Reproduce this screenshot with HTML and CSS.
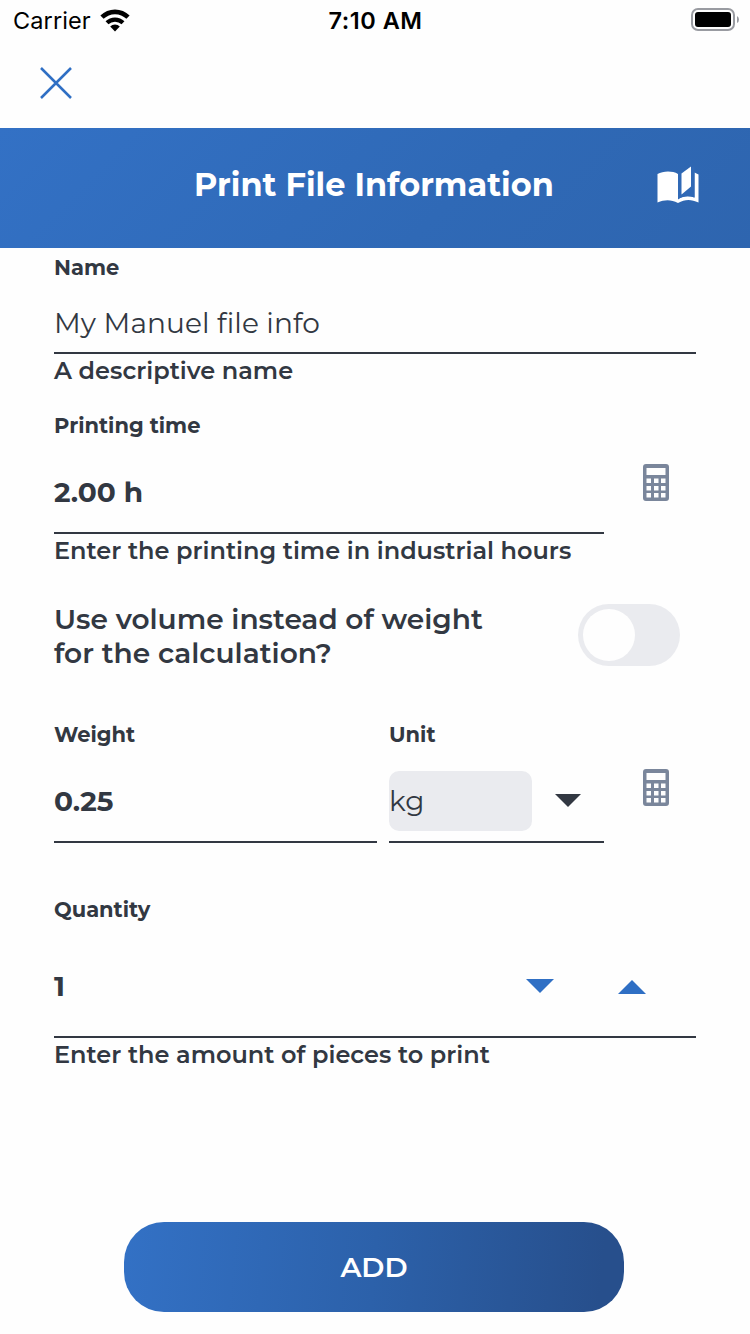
FILE: index.html
```html
<!DOCTYPE html>
<html lang="en">

<head>
  <meta charset="UTF-8">
  <title>Print File Information</title>
  <link rel="stylesheet" href="styles.css">
</head>

<body>
  <div class="app">
    <div class="status">
      <div class="status-left">
        <span class="carrier">Carrier</span>
        <svg class="wifi" width="30" height="23" viewBox="0 0 30 23">
          <path d="M2 8.2A18.5 18.5 0 0 1 28 8.2" fill="none" stroke="#000" stroke-width="4.6"/>
          <path d="M7 13.8A11.5 11.5 0 0 1 23 13.8" fill="none" stroke="#000" stroke-width="4.2"/>
          <path d="M10.2 17.6A6.8 6.8 0 0 1 19.8 17.6L15 22.4Z"/>
        </svg>
      </div>
      <span class="time">7:10 AM</span>
      <div class="status-right">
        <svg width="49" height="24" viewBox="0 0 49 24">
          <rect x="1" y="1" width="42" height="21" rx="6" fill="none" stroke="#999ba1" stroke-width="2"/>
          <rect x="4" y="4" width="36" height="15" rx="3" fill="#000"/>
          <path d="M46 8Q48 9 48 11.5T46 15Z" fill="#999ba1"/>
        </svg>
      </div>
    </div>

    <div class="toolbar">
      <svg width="32" height="32" viewBox="0 0 32 32">
        <path d="M1 1L31 31M31 1L1 31" stroke="#2f6fc4" stroke-width="2.5"/>
      </svg>
    </div>

    <div class="header">
      <h1>Print File Information</h1>
      <svg class="book" width="42" height="37" viewBox="0 0 42 37">
        <path fill="#fff" d="M0.500 8C6 5 15 4.500 21 8V33C27 29.500 32 29.500 37.500 31.500V6.500L41.500 8.500V36.500C34 33 28 33 21 37C14 33.500 8 33.500 0.500 36.500Z"/>
        <path fill="#3069b6" d="M21 7L37.500 0V31.500C32 29.500 26 29.500 21 33.500Z"/>
        <path fill="#fff" d="M24.500 7.500L34 0.500V20.500L24.500 28.500Z"/>
      </svg>
    </div>

    <div class="form">
      <div class="field">
        <label class="label">Name</label>
        <div class="value value-name"><span>My Manuel file info</span></div>
        <div class="hint">A descriptive name</div>
      </div>

      <div class="row time-row">
        <div class="field field-wide">
          <label class="label">Printing time</label>
          <div class="value"><span>2.00 h</span></div>
          <div class="hint">Enter the printing time in industrial hours</div>
        </div>
        <svg class="calc" width="26" height="37" viewBox="0 0 26 37">
          <path fill="#7a869b" fill-rule="evenodd" d="M3 0H23Q26 0 26 3V34Q26 37 23 37H3Q0 37 0 34V3Q0 0 3 0ZM3.500 4V11H22.500V4ZM3.500 14.500V19H8V14.500ZM11 14.500V19H15.500V14.500ZM18 14.500V19H22.500V14.500ZM3.500 22V26.500H8V22ZM11 22V26.500H15.500V22ZM18 22V26.500H22.500V22ZM3.500 29V33.500H8V29ZM11 29V33.500H15.500V29ZM18 29V33.500H22.500V29Z"/>
        </svg>
      </div>

      <div class="switch-row">
        <p class="question">Use volume instead of weight<br>for the calculation?</p>
        <div class="switch"><div class="knob"></div></div>
      </div>

      <div class="row weight-row">
        <div class="field field-weight">
          <label class="label">Weight</label>
          <div class="value"><span>0.25</span></div>
        </div>
        <div class="field field-unit">
          <label class="label">Unit</label>
          <div class="value">
            <div class="select">kg</div>
            <svg class="caret" width="26" height="13" viewBox="0 0 26 13"><path d="M0 0H26L13 13Z" fill="#323842"/></svg>
          </div>
        </div>
        <svg class="calc" width="26" height="37" viewBox="0 0 26 37">
          <path fill="#7a869b" fill-rule="evenodd" d="M3 0H23Q26 0 26 3V34Q26 37 23 37H3Q0 37 0 34V3Q0 0 3 0ZM3.500 4V11H22.500V4ZM3.500 14.500V19H8V14.500ZM11 14.500V19H15.500V14.500ZM18 14.500V19H22.500V14.500ZM3.500 22V26.500H8V22ZM11 22V26.500H15.500V22ZM18 22V26.500H22.500V22ZM3.500 29V33.500H8V29ZM11 29V33.500H15.500V29ZM18 29V33.500H22.500V29Z"/>
        </svg>
      </div>

      <div class="field quantity">
        <label class="label">Quantity</label>
        <div class="value value-quantity">
          <span>1</span>
          <div class="stepper">
            <svg width="28" height="15" viewBox="0 0 28 15"><path d="M0 0H28L14 14Z" fill="#2f6fc4"/></svg>
            <svg width="28" height="15" viewBox="0 0 28 15"><path d="M0 15H28L14 1Z" fill="#2f6fc4"/></svg>
          </div>
        </div>
        <div class="hint">Enter the amount of pieces to print</div>
      </div>
    </div>

    <button class="add">ADD</button>
  </div>
</body>

</html>
```
FILE: styles.css
```css
* {
  box-sizing: border-box;
}

body {
  margin: 0;
  background-color: #fefefe;
  color: #323842;
  font-family: Montserrat, Inter, sans-serif;
  font-variant-ligatures: none;
}

svg {
  display: block;
  flex-shrink: 0;
}

.app {
  display: flex;
  flex-direction: column;
  width: 750px;
  height: 1334px;
}

.status {
  display: grid;
  grid-template-columns: 1fr auto 1fr;
  align-items: center;
  height: 40px;
  padding: 0 10px 0 13px;
  color: #000;
  font-family: Inter, sans-serif;
  font-size: 23.5px;
}

.status-left {
  display: flex;
  align-items: center;
  gap: 9px;
}

.carrier {
  letter-spacing: 0.1px;
}

.time {
  padding-right: 2px;
  font-weight: 600;
  letter-spacing: 0.5px;
}

.status-right {
  display: flex;
  justify-content: flex-end;
}

.toolbar {
  height: 88px;
  padding: 27px 40px;
}

.header {
  display: flex;
  justify-content: space-between;
  height: 120px;
  padding: 38px 51px 0 194px;
  background: linear-gradient(135deg, #3371c5, #2f69b6 60%, #2e65af);
  color: #fff;
}

.header h1 {
  margin: 0;
  font-size: 32px;
  line-height: 37px;
  font-weight: 700;
  white-space: nowrap;
}

.form {
  padding: 0 54px;
}

.row {
  display: flex;
}

.label {
  display: block;
  height: 38px;
  line-height: 40px;
  font-size: 21px;
  font-weight: 700;
}

.value {
  display: flex;
  align-items: center;
  height: 90px;
  padding-top: 8px;
  border-bottom: 2px solid #323842;
  font-size: 28px;
  font-weight: 700;
}

.value-name {
  height: 68px;
  padding-top: 7px;
  font-weight: 400;
  letter-spacing: 0.1px;
}

.value-quantity {
  justify-content: space-between;
  height: 110px;
}

.hint {
  height: 34px;
  line-height: 34px;
  font-size: 24px;
  font-weight: 600;
  white-space: nowrap;
}

.time-row {
  margin-top: 18px;
}

.field-wide {
  width: 550px;
}

.calc {
  margin: 58px 0 0 39px;
}

.switch-row {
  display: flex;
  justify-content: space-between;
  height: 68px;
  margin-top: 34px;
  padding-right: 16px;
}

.question {
  margin: 0;
  font-size: 28px;
  line-height: 34px;
  font-weight: 600;
}

.switch {
  width: 102px;
  height: 62px;
  margin-top: 2px;
  padding: 5px;
  border-radius: 31px;
  background-color: #eaebef;
}

.knob {
  width: 52px;
  height: 52px;
  border-radius: 50%;
  background-color: #fefefe;
}

.weight-row {
  margin-top: 45px;
}

.weight-row .calc {
  margin-top: 54px;
}

.field-weight {
  width: 323px;
  margin-right: 12px;
}

.field-unit {
  width: 215px;
}

.select {
  width: 143px;
  height: 60px;
  margin-right: 23px;
  border-radius: 10px;
  background-color: #eaebef;
  line-height: 61px;
  font-weight: 400;
}

.caret {
  margin-bottom: 2px;
}

.quantity {
  margin-top: 47px;
}

.stepper {
  display: flex;
  gap: 64px;
  padding-right: 50px;
}

.add {
  width: 500px;
  height: 90px;
  margin: 150px 0 0 124px;
  padding: 0;
  border: none;
  border-radius: 40px;
  background: linear-gradient(95deg, #3371c5, #2c61aa 50%, #274f8c 95%);
  color: #fff;
  font-family: inherit;
  font-size: 28px;
  font-weight: 600;
}
```
